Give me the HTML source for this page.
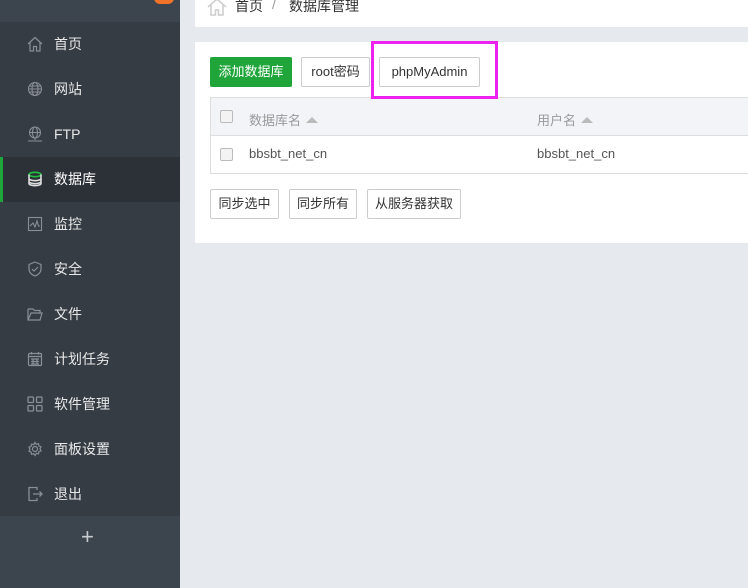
<!DOCTYPE html>
<html><head><meta charset="utf-8"><style>
*{margin:0;padding:0;box-sizing:border-box}
body{width:748px;height:588px;overflow:hidden;background:#e6e9ed;font-family:"Liberation Sans","Noto Sans CJK SC",sans-serif;position:relative}
.sb{position:absolute;left:0;top:0;width:180px;height:588px;background:#3c444d}
.menu{position:absolute;left:0;top:22px;width:180px;height:494px;background:#353c44}
.it{position:absolute;left:0;width:180px;height:45px;color:#e8e8e8;font-size:14px;line-height:45px;padding-left:54px}
.it svg{position:absolute;left:27px;top:14px}
.act{background:#2c3138;border-left:3px solid #20a53a;color:#fff;padding-left:51px}
.act svg{left:24px}
.plus{position:absolute;left:80px;top:524px;color:#c8ccd0;font-size:22px;line-height:26px}
.badge{position:absolute;left:154px;top:-8px;width:20px;height:12px;border-radius:6px;background:#f27227}
.hdr{position:absolute;left:195px;top:0;width:553px;height:27px;background:#fff;font-size:14px;color:#333}
.panel{position:absolute;left:195px;top:42px;width:553px;height:201px;background:#fff}
.btn{position:absolute;height:30px;border:1px solid #ccc;border-radius:2px;background:#fff;font-size:13px;color:#333;line-height:28px;text-align:center}
.g{background:#20a53a;border-color:#20a53a;color:#fff}
.tbl{position:absolute;left:15px;top:55px;width:540px;height:77px;border:1px solid #ddd;border-right:none}
.th{height:38px;background:#f3f4f8;border-bottom:1px solid #ddd;position:relative}
.cb{position:absolute;left:9px;width:13px;height:13px;border:1px solid #bbb;border-radius:2px;background:#f3f3f3}
.t{position:absolute;font-size:13px}
.tri{display:inline-block;width:0;height:0;border-left:6px solid transparent;border-right:6px solid transparent;border-bottom:6px solid #bbb;margin-left:5px;vertical-align:2px}
</style></head><body>
<div class="sb">
<div class="badge"></div>
<div class="menu">
<div class="it" style="top:0"><svg width="16" height="16" viewBox="0 0 16 16" fill="none" stroke="#8a8f95" stroke-width="1.2"><path d="M1 8L8 1.5 15 8M3 6.5V15H6.5V10.5H9.5V15H13V6.5"/></svg>首页</div>
<div class="it" style="top:45px"><svg width="16" height="16" viewBox="0 0 16 16" fill="none" stroke="#8a8f95" stroke-width="1.1"><circle cx="8" cy="8" r="6.5"/><ellipse cx="8" cy="8" rx="3" ry="6.5"/><path d="M1.5 8h13M2.5 5h11M2.5 11h11"/></svg>网站</div>
<div class="it" style="top:90px"><svg width="16" height="16" viewBox="0 0 16 16" fill="none" stroke="#8a8f95" stroke-width="1.1"><circle cx="8" cy="6.5" r="5.5"/><ellipse cx="8" cy="6.5" rx="2.5" ry="5.5"/><path d="M2.5 6.5h11M8 12v2M1 15h14"/></svg>FTP</div>
<div class="it act" style="top:135px"><svg width="16" height="16" viewBox="0 0 16 16" fill="none" stroke-width="1.6"><ellipse cx="8" cy="3.5" rx="6" ry="2.2" stroke="#20c040"/><path d="M2 3.5v9c0 1.2 2.7 2.2 6 2.2s6-1 6-2.2v-9M2 7.5c0 1.2 2.7 2.2 6 2.2s6-1 6-2.2M2 10.5c0 1.2 2.7 2.2 6 2.2s6-1 6-2.2" stroke="#ddd"/></svg>数据库</div>
<div class="it" style="top:180px"><svg width="16" height="16" viewBox="0 0 16 16" fill="none" stroke="#8a8f95" stroke-width="1.1"><rect x="1.5" y="1.5" width="13" height="13"/><path d="M3 10l3-3 2 4 2-6 1.5 5H13"/></svg>监控</div>
<div class="it" style="top:225px"><svg width="16" height="16" viewBox="0 0 16 16" fill="none" stroke="#8a8f95" stroke-width="1.2"><path d="M8 1L14 3.5V8c0 3.5-3 6-6 7-3-1-6-3.5-6-7V3.5z"/><path d="M5 8l2 2 4-4"/></svg>安全</div>
<div class="it" style="top:270px"><svg width="16" height="16" viewBox="0 0 16 16" fill="none" stroke="#8a8f95" stroke-width="1.2"><path d="M1 3h5l1.5 1.5H13V7M1 3v11h12l2-7H4L1 14"/></svg>文件</div>
<div class="it" style="top:315px"><svg width="16" height="16" viewBox="0 0 16 16" fill="none" stroke="#8a8f95" stroke-width="1.2"><rect x="1.5" y="2.5" width="13" height="12" rx="1"/><path d="M1.5 5.5h13M4 8h8M4 10.5h8M4 13h8M6 8v5M10 8v5M4.5 1v2.5M11.5 1v2.5"/></svg>计划任务</div>
<div class="it" style="top:360px"><svg width="16" height="16" viewBox="0 0 16 16" fill="none" stroke="#8a8f95" stroke-width="1.3"><rect x="1" y="1" width="5.5" height="5.5" rx="1"/><rect x="9.5" y="1" width="5.5" height="5.5" rx="1"/><rect x="1" y="9.5" width="5.5" height="5.5" rx="1"/><rect x="9.5" y="9.5" width="5.5" height="5.5" rx="1"/></svg>软件管理</div>
<div class="it" style="top:405px"><svg width="16" height="16" viewBox="0 0 16 16" fill="none" stroke="#8a8f95" stroke-width="1.2"><circle cx="8" cy="8" r="2.5"/><path d="M8 1.5l1.3 1.8 2.2-.6.4 2.2 2.1.9-1 2 1 2-2.1.9-.4 2.2-2.2-.6L8 14.5l-1.3-1.8-2.2.6-.4-2.2-2.1-.9 1-2-1-2 2.1-.9.4-2.2 2.2.6z"/></svg>面板设置</div>
<div class="it" style="top:450px"><svg width="16" height="16" viewBox="0 0 16 16" fill="none" stroke="#8a8f95" stroke-width="1.3"><path d="M10 4V1.5H2v13h8V12M6 8h9M12.5 5.5L15 8l-2.5 2.5"/></svg>退出</div>
</div>
<div class="plus" style="left:81px">+</div>
</div>
<div class="hdr">
<svg style="position:absolute;left:12px;top:-2px" width="20" height="18" viewBox="0 0 20 18" fill="none" stroke="#ccc" stroke-width="1.5"><path d="M1 9L10 1l9 8M4 7v10h4.5v-5h3v5H16V7"/></svg>
<span style="position:absolute;left:40px;top:-4px">首页</span>
<span style="position:absolute;left:77px;top:-4px;color:#999">/</span>
<span style="position:absolute;left:94px;top:-4px">数据库管理</span>
</div>
<div class="panel">
<div class="btn g" style="left:15px;top:15px;width:82px">添加数据库</div>
<div class="btn" style="left:106px;top:15px;width:69px">root密码</div>
<div class="btn" style="left:184px;top:15px;width:101px">phpMyAdmin</div>
<div class="tbl">
<div class="th"><div class="cb" style="top:12px"></div><span class="t" style="left:38px;top:12px;color:#999">数据库名<span class="tri"></span></span><span class="t" style="left:326px;top:12px;color:#999">用户名<span class="tri"></span></span></div>
<div style="position:relative;height:37px"><div class="cb" style="top:12px"></div><span class="t" style="left:38px;top:10px;color:#555">bbsbt_net_cn</span><span class="t" style="left:326px;top:10px;color:#555">bbsbt_net_cn</span></div>
</div>
<div style="position:absolute;left:176px;top:-1px;width:127px;height:58px;border:3px solid #ee22ee;z-index:5"></div>
<div class="btn" style="left:15px;top:147px;width:69px">同步选中</div>
<div class="btn" style="left:94px;top:147px;width:68px">同步所有</div>
<div class="btn" style="left:172px;top:147px;width:94px">从服务器获取</div>
</div>
</body></html>
